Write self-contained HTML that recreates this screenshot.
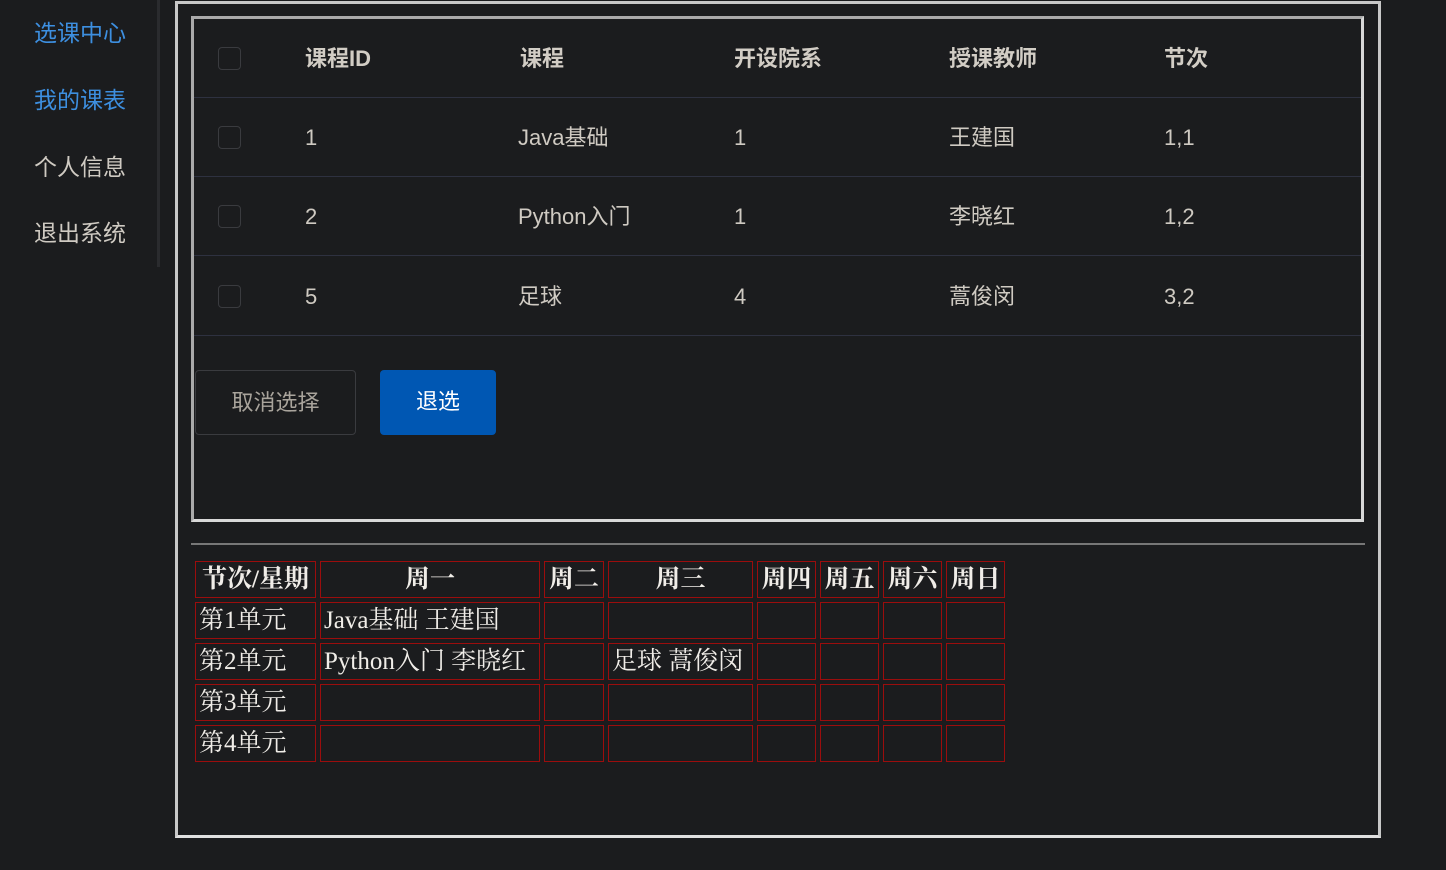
<!DOCTYPE html>
<html><head><meta charset="utf-8"><style>
*{box-sizing:border-box}
body{margin:0;width:1446px;height:870px;background:#1b1c1e;overflow:hidden;font-family:"Liberation Sans","Noto Sans CJK SC",sans-serif;position:relative}
.side{position:absolute;left:0;top:0;width:160px;height:267px;border-right:3px solid #2a2b2e}
.side div{position:absolute;left:34px;font-size:23px;color:#cfcac2;line-height:1}
.side .a{color:#3d8fe0}
.outer{position:absolute;left:175px;top:1px;width:1206px;height:837px;border:3px solid #c8c8c8;border-bottom-color:#e0e0e0}
.inner{position:absolute;left:191px;top:16px;width:1173px;height:506px;border:3px solid #d8d8d8;border-top-color:#aaa;border-left-color:#aaa}
.row{position:absolute;left:0;width:1167px;height:79px;border-bottom:1px solid #2e3140}
.cb{position:absolute;left:24px;width:23px;height:23px;border:1px solid #3a3b3f;border-radius:4px;top:28px}
.c{position:absolute;top:28px;font-size:22px;color:#cfcac2;line-height:24px}
.h .c{font-weight:bold;color:#d2cdc5}
.btn{position:absolute;top:351px;height:65px;border-radius:4px;font-size:22px;line-height:63px;text-align:center}
hr{position:absolute;left:191px;top:543px;width:1174px;margin:0;border:0;border-top:2px solid #777}
table{position:absolute;left:191px;top:557px;border-collapse:separate;border-spacing:4px 4px;font-family:"Liberation Serif","Noto Serif CJK SC",serif;font-size:25px;color:#f0ede8}
td,th{border:1px solid #9b0d0d;height:37px;padding:0 3px;white-space:nowrap;line-height:33px}
th{font-weight:bold}
</style></head><body>
<div class="side">
<div class="a" style="top:22px">选课中心</div>
<div class="a" style="top:89px">我的课表</div>
<div style="top:156px">个人信息</div>
<div style="top:222px">退出系统</div>
</div>
<div class="outer"></div>
<div class="inner">
<div class="row h" style="top:0"><div class="cb"></div><div class="c" style="left:111px">课程ID</div><div class="c" style="left:326px">课程</div><div class="c" style="left:540px">开设院系</div><div class="c" style="left:755px">授课教师</div><div class="c" style="left:970px">节次</div></div>
<div class="row" style="top:79px"><div class="cb"></div><div class="c" style="left:111px">1</div><div class="c" style="left:324px">Java基础</div><div class="c" style="left:540px">1</div><div class="c" style="left:755px">王建国</div><div class="c" style="left:970px">1,1</div></div>
<div class="row" style="top:158px"><div class="cb"></div><div class="c" style="left:111px">2</div><div class="c" style="left:324px">Python入门</div><div class="c" style="left:540px">1</div><div class="c" style="left:755px">李晓红</div><div class="c" style="left:970px">1,2</div></div>
<div class="row" style="top:238px"><div class="cb"></div><div class="c" style="left:111px">5</div><div class="c" style="left:324px">足球</div><div class="c" style="left:540px">4</div><div class="c" style="left:755px">蒿俊闵</div><div class="c" style="left:970px">3,2</div></div>
<div class="btn" style="left:1px;width:161px;border:1px solid #3a3b3f;color:#a9a49c">取消选择</div>
<div class="btn" style="left:186px;width:116px;background:#0057b3;color:#fff">退选</div>
</div>
<hr>
<table>
<tr><th style="width:121px">节次/星期</th><th style="width:220px">周一</th><th style="width:60px">周二</th><th style="width:145px">周三</th><th style="width:59px">周四</th><th style="width:59px">周五</th><th style="width:59px">周六</th><th style="width:59px">周日</th></tr>
<tr><td>第1单元</td><td>Java基础 王建国</td><td></td><td></td><td></td><td></td><td></td><td></td></tr>
<tr><td>第2单元</td><td>Python入门 李晓红</td><td></td><td>足球 蒿俊闵</td><td></td><td></td><td></td><td></td></tr>
<tr><td>第3单元</td><td></td><td></td><td></td><td></td><td></td><td></td><td></td></tr>
<tr><td>第4单元</td><td></td><td></td><td></td><td></td><td></td><td></td><td></td></tr>
</table>
</body></html>
